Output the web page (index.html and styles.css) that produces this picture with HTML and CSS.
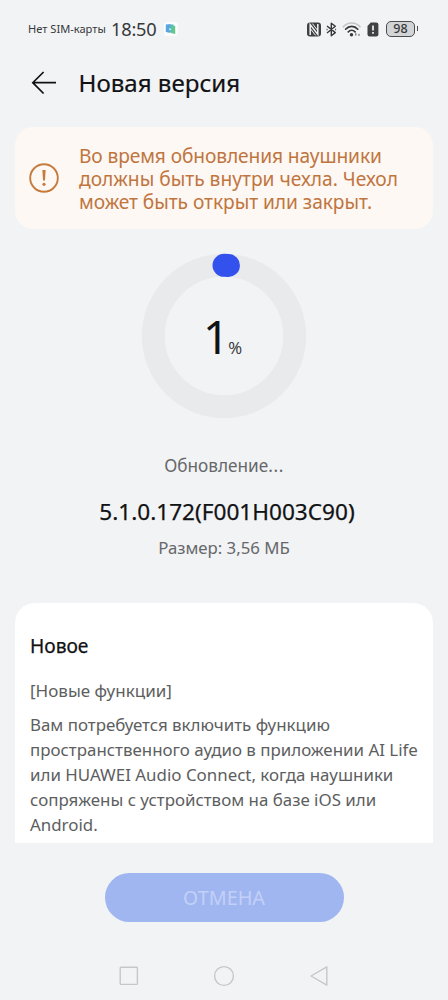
FILE: index.html
```html
<!DOCTYPE html>
<html lang="ru">
<head>
<meta charset="utf-8">
<title>Новая версия</title>
<link rel="stylesheet" href="styles.css">
</head>
<body>
<div class="screen">
  <div class="status">
    <span class="carrier">Нет SIM-карты</span>
    <span class="clock">18:50</span>
    <svg class="app-badge" width="14" height="14" viewBox="0 0 14 14">
      <rect width="14" height="14" rx="3" fill="#fbfdfd"/>
      <path d="M1.8 2.4 6.5 2v9L1.8 10z" fill="#5aa5df"/>
      <path d="M6 2.6h3.6v8.6L6 10z" fill="#54b8c4"/>
      <path d="M7.6 4.2l3.6-.4v8.3L7 11z" fill="#62c68d"/>
      <circle cx="6" cy="7.2" r="1" fill="#c9f0f5"/>
    </svg>
    <span class="status-icons">
      <svg width="14" height="15" viewBox="0 0 14 15">
        <rect x="0" y=".4" width="14" height="14" rx="3" fill="#404144"/>
        <path d="M3.2 13V2.6l7.6 9.8V2" fill="none" stroke="#f2f3f5" stroke-width="1.5"/>
        <path d="M5.4 1.6l5.2 6.8M3.4 6.6l5.2 6.8" fill="none" stroke="#f2f3f5" stroke-width="1"/>
      </svg>
      <svg width="11" height="15" viewBox="0 0 11 15" fill="none" stroke="#37383b" stroke-width="1.4" stroke-linejoin="round">
        <path d="M1 4l8.3 6.6-4 3.2V1.2l4 3.1L1 11"/>
        <path d="M.6 7.5h.9M9.2 7.5h.9"/>
      </svg>
      <svg width="20" height="15" viewBox="0 0 20 15" fill="none" stroke-linecap="round">
        <path d="M1.4 4.8C6-.2 13.4-.2 18 4.8" stroke="#c3c4c6" stroke-width="1.6"/>
        <path d="M3.6 7.2c3.4-3.8 8.8-3.8 12.2 0M6.3 9.8c2-2 4.8-2 6.8 0" stroke="#37383b" stroke-width="1.7"/>
        <circle cx="9.5" cy="12.7" r="1.7" fill="#37383b"/>
        <path d="M13.8 11.8v1.2M17 12.4v.8" stroke="#77787b" stroke-width="1.4"/>
      </svg>
      <svg width="12" height="15" viewBox="0 0 12 15">
        <path d="M3.8.5h5.4a2.2 2.2 0 0 1 2.2 2.2v9.6a2.2 2.2 0 0 1-2.2 2.2H2.7A2.2 2.2 0 0 1 .5 12.3V4z" fill="#404144"/>
        <path d="M6 3.6v4.8M6 10v1.7" stroke="#fff" stroke-width="1.6"/>
      </svg>
      <span class="battery">98</span>
    </span>
  </div>

  <header class="header">
    <svg width="26" height="24" viewBox="0 0 26 24" fill="none" stroke="#111214" stroke-width="1.7">
      <path d="M25 11.7H1.6M12.6 1 1.8 11.7l10.8 10.8"/>
    </svg>
    <h1 class="title">Новая версия</h1>
  </header>

  <section class="alert">
    <svg width="30" height="30" viewBox="0 0 30 30">
      <circle cx="15" cy="15" r="13.8" fill="none" stroke="#c67a3c" stroke-width="1.9"/>
      <path d="M13.4 7h3.2l-.6 10.5h-2z" fill="#c67a3c"/>
      <circle cx="15" cy="21.3" r="1.6" fill="#c67a3c"/>
    </svg>
    <p class="alert-text">
      <span class="line tight">Во время обновления наушники</span>
      <span class="line">должны быть внутри чехла. Чехол</span>
      <span class="line snug">может быть открыт или закрыт.</span>
    </p>
  </section>

  <section class="progress">
    <svg class="ring" width="166" height="166" viewBox="0 0 166 166" fill="none" stroke-width="23">
      <circle cx="83" cy="83" r="70.7" stroke="#e9eaec"/>
      <path d="M83 12.3A70.7 70.7 0 0 1 87.4 12.44" stroke="#3352ed" stroke-linecap="round"/>
    </svg>
    <div class="percent"><span class="value">1</span><span class="unit">%</span></div>
  </section>

  <section class="summary">
    <p class="state">Обновление<span class="dots">...</span></p>
    <p class="version">5.1.0.172(F001H003C90)</p>
    <p class="size">Размер: 3,56 МБ</p>
  </section>

  <section class="notes">
    <h2 class="notes-title">Новое</h2>
    <p class="notes-group">[Новые функции]</p>
    <p class="notes-text">Вам потребуется включить функцию<br>пространственного аудио в приложении AI Life<br>или HUAWEI Audio Connect, когда наушники<br>сопряжены с устройством на базе iOS или<br>Android.</p>
  </section>

  <footer class="footer">
    <button class="cancel">ОТМЕНА</button>
  </footer>

  <nav class="navbar">
    <svg width="20" height="20" viewBox="0 0 20 20"><rect x="1.2" y="1.2" width="17.2" height="17.2" rx=".8"/></svg>
    <svg width="22" height="22" viewBox="0 0 22 22"><circle cx="11" cy="11" r="9.4"/></svg>
    <svg width="20" height="22" viewBox="0 0 20 22"><path d="M17.8 1.8v18.4L2 11z"/></svg>
  </nav>
</div>
</body>
</html>
```
FILE: styles.css
```css
* { box-sizing: border-box; margin: 0; padding: 0; }

body {
  background: #f2f3f5;
  color: #111214;
  font-family: "Noto Sans", "Open Sans", sans-serif;
}

.screen {
  width: 448px;
  height: 1000px;
  overflow: hidden;
  display: flex;
  flex-direction: column;
}

svg { display: block; flex: none; }

.status {
  height: 58px;
  padding: 0 33px 0 28px;
  display: flex;
  align-items: center;
  color: #37383b;
  white-space: nowrap;
}

.carrier { width: 83px; font-size: 11.1px; line-height: 16px; margin-bottom: 1px; }
.clock { width: 53px; font-size: 18.2px; line-height: 26px; letter-spacing: -0.2px; }
.status-icons { margin-left: auto; display: flex; align-items: center; gap: 5px; }

.battery {
  position: relative;
  width: 29px;
  height: 16px;
  margin-left: 2px;
  border: 1.5px solid #4b4c4f;
  border-radius: 5px;
  background: #d3d4d6;
  font-size: 12.5px;
  font-weight: 500;
  line-height: 14px;
  text-align: center;
}

.battery::after {
  content: "";
  position: absolute;
  right: -4px;
  top: 4px;
  width: 1.5px;
  height: 5px;
  background: #4b4c4f;
}

.header {
  height: 50px;
  padding-left: 31px;
  display: flex;
  align-items: center;
  gap: 21.5px;
}

.title {
  font-size: 24.1px;
  font-weight: 400;
  line-height: 32px;
  -webkit-text-stroke: 0.2px currentColor;
}

.alert {
  height: 102px;
  margin: 19px 15px 0;
  padding-left: 14px;
  display: flex;
  align-items: center;
  gap: 20px;
  border-radius: 18px;
  background: #fdf8f3;
  color: #c0753f;
}

.alert-text { padding-top: 1px; font-size: 19.2px; line-height: 23px; white-space: nowrap; }
.line { display: block; }
.tight { letter-spacing: -0.12px; }
.snug { letter-spacing: -0.06px; }

.progress {
  height: 166px;
  margin-top: 24px;
  display: grid;
  place-items: center;
}

.ring, .percent { grid-area: 1 / 1; }
.percent { display: flex; align-items: baseline; line-height: 56px; padding: 12px 3px 0 0; }
.value { font-size: 46px; }
.unit { margin-left: -1px; font-size: 17px; font-weight: 300; color: #222326; -webkit-text-stroke: 0.2px currentColor; }

.summary {
  margin-top: 31px;
  text-align: center;
  color: #66676a;
}

.state { font-size: 17.2px; line-height: 32px; }
.dots { letter-spacing: 0.6px; }

.version {
  margin: 14px 0 5px;
  padding-left: 6px;
  font-size: 22.6px;
  line-height: 32px;
  color: #111214;
  -webkit-text-stroke: 0.25px currentColor;
}

.size { font-size: 16.8px; line-height: 30px; }

.notes {
  height: 240px;
  margin: 40px 15px 0;
  padding: 28px 15px 0;
  border-radius: 20px 20px 0 0;
  background: #fff;
  color: #5d5e60;
}

.notes-title { font-size: 19.2px; font-weight: 400; line-height: 30px; color: #111214; -webkit-text-stroke: 0.25px currentColor; }
.notes-group { margin-top: 18px; font-size: 17px; line-height: 24px; }
.notes-text { margin-top: 8.5px; font-size: 16.9px; line-height: 25px; white-space: nowrap; }

.footer { padding-top: 30px; display: flex; justify-content: center; }

.cancel {
  width: 239px;
  height: 49px;
  border: 0;
  border-radius: 25px;
  background: #a0b6f0;
  color: #c3d0f7;
  font: 400 19.8px/49px "Noto Sans", sans-serif;
}

.navbar {
  height: 22px;
  margin-top: 42.5px;
  padding: 0 119px;
  display: flex;
  justify-content: space-between;
  align-items: center;
  fill: none;
  stroke: #c6c7c9;
  stroke-width: 1.4;
  stroke-linejoin: round;
}
```
